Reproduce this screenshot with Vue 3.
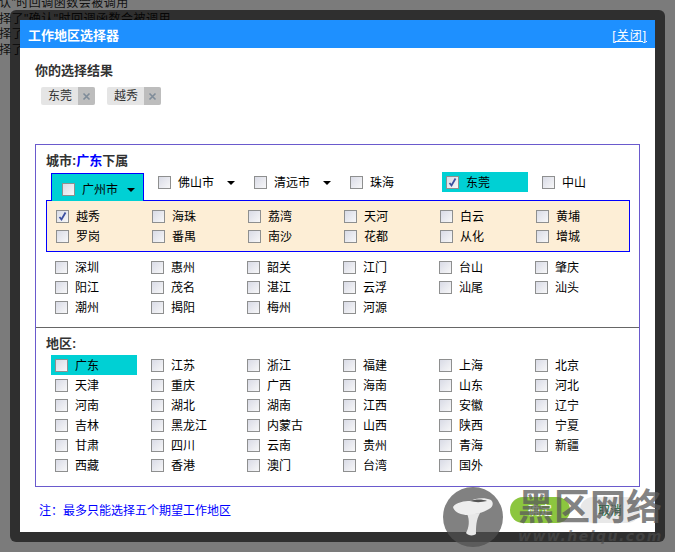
<template>
  <div class="page">
    <!-- 背景文字 -->
    <div class="bg-text">
      <p>认"时回调函数会被调用</p>
      <p>择了"确认"时回调函数会被调用</p>
      <p>择了</p>
      <p>择了</p>
    </div>

    <div class="overlay">
      <div class="frame">
        <div class="dialog">
          <div class="dialog-header">
            <h2 class="dialog-title">工作地区选择器</h2>
            <a class="btn-close">[关闭]</a>
          </div>

          <!-- 选择结果 -->
          <div class="result">
            <div class="section-title">你的选择结果</div>
            <div class="tags">
              <span v-for="t in selected" :key="t" class="tag">
                <span class="tag-text">{{ t }}</span>
                <span class="tag-x">
                  <svg width="9" height="9" viewBox="0 0 9 9"><path d="M1.5 1.5l6 6M7.5 1.5l-6 6" stroke="#7f8c99" stroke-width="1.6" fill="none" /></svg>
                </span>
              </span>
            </div>
          </div>

          <div class="picker">
            <!-- 城市 -->
            <div class="picker-city">
              <div class="section-title">城市:<span class="blue">广东</span>下属</div>
              <div class="tab-row">
                <div class="tab-active">
                  <span class="cb"></span>
                  <span class="tab-name">广州市</span>
                  <i class="arrow"></i>
                </div>
                <div v-for="c in topCities" :key="c.name" class="item" :class="{ hl: c.on }">
                  <span class="cb" :class="{ on: c.on }">
                    <svg v-if="c.on" width="11" height="11" viewBox="0 0 11 11"><path d="M2.5 6l2 2.5L8.5 1.5" stroke="#3c4fa0" stroke-width="1.8" fill="none" /></svg>
                  </span>
                  <span class="name">{{ c.name }}</span>
                  <i v-if="c.arrow" class="arrow wide"></i>
                </div>
              </div>
              <div class="panel">
                <div v-for="d in districts" :key="d" class="item">
                  <span class="cb" :class="{ on: d === '越秀' }">
                    <svg v-if="d === '越秀'" width="11" height="11" viewBox="0 0 11 11"><path d="M2.5 6l2 2.5L8.5 1.5" stroke="#3c4fa0" stroke-width="1.8" fill="none" /></svg>
                  </span>
                  <span class="name">{{ d }}</span>
                </div>
              </div>
              <div class="grid">
                <div v-for="c in otherCities" :key="c" class="item">
                  <span class="cb"></span>
                  <span class="name">{{ c }}</span>
                </div>
              </div>
            </div>

            <!-- 地区 -->
            <div class="picker-region">
              <div class="section-title">地区:</div>
              <div class="grid">
                <div v-for="r in regions" :key="r" class="item" :class="{ hl: r === '广东' }">
                  <span class="cb"></span>
                  <span class="name">{{ r }}</span>
                </div>
              </div>
            </div>
          </div>

          <div class="footer">
            <span class="note">注：最多只能选择五个期望工作地区</span>
            <div class="buttons">
              <button class="btn btn-ok">确定</button>
              <button class="btn btn-cancel">取消</button>
            </div>
          </div>
        </div>
      </div>
    </div>

    <!-- 水印 -->
    <div class="watermark">
      <svg class="wm-logo" width="60" height="60" viewBox="0 0 60 60">
        <circle cx="30" cy="30" r="30" fill="rgba(80,80,80,0.72)" />
        <path d="M24 27C27 33 26 41 23 46C25 49 31 49 33 47C33 40 33 33 37 26Z" fill="#e8e8e8" />
        <path d="M10 20C13 15 22 14 27 14C32 11 42 10 48 13C51 16 50 20 46 22C40 26 32 27 25 28C18 28 11 25 10 20Z" fill="#eeeeee" />
        <path d="M27 14C32 12 40 12 44 14C38 15.5 32 15.5 27 14Z" fill="#555" />
      </svg>
      <div class="wm-text">
        <div class="wm-title">黑区网络</div>
        <div class="wm-url">www.heiqu.com</div>
      </div>
    </div>
  </div>
</template>

<script setup>
const selected = ['东莞', '越秀']

const topCities = [
  { name: '佛山市', arrow: true },
  { name: '清远市', arrow: true },
  { name: '珠海' },
  { name: '东莞', on: true },
  { name: '中山' }
]

const districts = ['越秀', '海珠', '荔湾', '天河', '白云', '黄埔', '罗岗', '番禺', '南沙', '花都', '从化', '增城']

const otherCities = ['深圳', '惠州', '韶关', '江门', '台山', '肇庆', '阳江', '茂名', '湛江', '云浮', '汕尾', '汕头', '潮州', '揭阳', '梅州', '河源']

const regions = [
  '广东', '江苏', '浙江', '福建', '上海', '北京',
  '天津', '重庆', '广西', '海南', '山东', '河北',
  '河南', '湖北', '湖南', '江西', '安徽', '辽宁',
  '吉林', '黑龙江', '内蒙古', '山西', '陕西', '宁夏',
  '甘肃', '四川', '云南', '贵州', '青海', '新疆',
  '西藏', '香港', '澳门', '台湾', '国外'
]
</script>

<style>
html,
body {
  margin: 0;
  background: #7b7b7b;
}
</style>

<style scoped>
.page {
  position: relative;
  width: 675px;
  height: 552px;
  overflow: hidden;
  background: #7b7b7b;
  font-family: "Liberation Sans", "Noto Sans CJK SC", sans-serif;
  font-size: 12px;
  color: #000;
}

.bg-text {
  color: #111;
  margin-top: -4px;
  margin-left: -1px;
  letter-spacing: 0.5px;
}

.bg-text p {
  margin: 0;
  line-height: 15.5px;
}

.overlay {
  position: absolute;
  top: 0;
  left: 0;
  right: 0;
  bottom: 0;
  padding: 10px;
}

.frame {
  height: 512px;
  padding: 10px;
  background: rgba(0, 0, 0, 0.62);
  border-radius: 6px;
}

.dialog {
  height: 512px;
  background: #fff;
}

.dialog-header {
  display: flex;
  justify-content: space-between;
  align-items: center;
  height: 28px;
  padding: 0 8px;
  background: #1e90ff;
  color: #fff;
}

.dialog-title {
  margin: 0;
  font-size: 13px;
  font-weight: 700;
}

.btn-close {
  text-decoration: underline;
  letter-spacing: 1px;
}

.result {
  box-sizing: border-box;
  height: 96px;
  padding: 15px 15px 0;
}

.section-title {
  font-size: 13px;
  font-weight: 700;
  color: #333;
  line-height: 16px;
}

.blue {
  color: #00f;
}

.tags {
  display: flex;
  gap: 12px;
  margin-top: 8px;
  margin-left: 6px;
}

.tag {
  display: flex;
  height: 18px;
  width: 54px;
  background: #e5e5e5;
  border-radius: 2px;
  color: #333;
  line-height: 18px;
}

.tag-text {
  flex: 1;
  padding-left: 7px;
}

.tag-x {
  display: flex;
  align-items: center;
  justify-content: center;
  width: 17px;
  background: #bdbdbd;
  border-radius: 0 2px 2px 0;
}

.picker {
  box-sizing: border-box;
  height: 343px;
  margin: 0 15px;
  border: 1px solid #6a5acd;
}

.picker-city {
  box-sizing: border-box;
  height: 183px;
  padding: 8px 10px 0;
  border-bottom: 1px solid #666;
}

.picker-region {
  padding: 8px 10px 0;
}

.tab-row {
  display: flex;
  height: 28px;
  margin-top: 3px;
  padding-left: 5px;
}

.tab-active {
  display: flex;
  align-items: center;
  box-sizing: border-box;
  flex: none;
  width: 93px;
  height: 28px;
  margin-top: 1px;
  margin-right: 10px;
  padding: 3px 0 0 10px;
  background: #00d0d4;
  border: 1px solid #00f;
  border-bottom: none;
  position: relative;
  z-index: 1;
}

.tab-name {
  margin-left: 7px;
  margin-bottom: 2px;
}

.arrow {
  display: block;
  width: 0;
  height: 0;
  margin-left: 9px;
  margin-top: 2px;
  border-left: 4px solid transparent;
  border-right: 4px solid transparent;
  border-top: 4px solid #000;
}

.arrow.wide {
  margin-left: 13px;
}

.item {
  display: flex;
  align-items: center;
  flex: none;
  box-sizing: border-box;
  width: 86px;
  height: 20px;
  margin-right: 10px;
  padding-left: 4px;
}

.item.hl {
  background: #00d0d4;
}

.name {
  margin-left: 7px;
  margin-bottom: 2px;
  white-space: nowrap;
}

.cb {
  display: flex;
  align-items: center;
  justify-content: center;
  flex: none;
  box-sizing: border-box;
  width: 13px;
  height: 13px;
  border: 1px solid #8e8f8f;
  background: linear-gradient(135deg, #d9dbe6, #f7f7f8);
}

.panel {
  display: flex;
  flex-wrap: wrap;
  align-content: flex-start;
  box-sizing: border-box;
  width: 584px;
  height: 52px;
  padding: 5px 0 0 5px;
  background: #fdeed6;
  border: 1px solid #00f;
}

.grid {
  display: flex;
  flex-wrap: wrap;
  align-content: flex-start;
  width: 580px;
  margin-left: 5px;
}

.picker-city .grid {
  margin-top: 5px;
}

.picker-region .grid {
  margin-top: 3px;
}

.footer {
  display: flex;
  justify-content: space-between;
  align-items: center;
  height: 45px;
  padding: 0 15px 0 19px;
}

.note {
  color: #00f;
}

.buttons {
  display: flex;
  gap: 10px;
}

.btn {
  width: 60px;
  height: 26px;
  padding: 0;
  border: none;
  border-radius: 13px;
  font-family: inherit;
  font-size: 12px;
}

.btn-ok {
  background: #8cc63f;
  color: #fff;
}

.btn-cancel {
  background: #e8e8e8;
  color: #063;
}

.watermark {
  position: absolute;
  left: 443px;
  top: 487px;
  display: flex;
  align-items: flex-start;
  pointer-events: none;
}

.wm-logo {
  flex: none;
}

.wm-text {
  margin-left: 15px;
}

.wm-title {
  margin-top: 1px;
  font-size: 36px;
  line-height: 40px;
  font-weight: 700;
  color: rgba(90, 90, 90, 0.75);
  white-space: nowrap;
}

.wm-url {
  margin-top: 1px;
  font-family: "DejaVu Sans", sans-serif;
  font-size: 14px;
  line-height: 14px;
  font-weight: 700;
  font-style: italic;
  letter-spacing: 1.5px;
  color: rgba(80, 80, 80, 0.6);
  white-space: nowrap;
}
</style>
